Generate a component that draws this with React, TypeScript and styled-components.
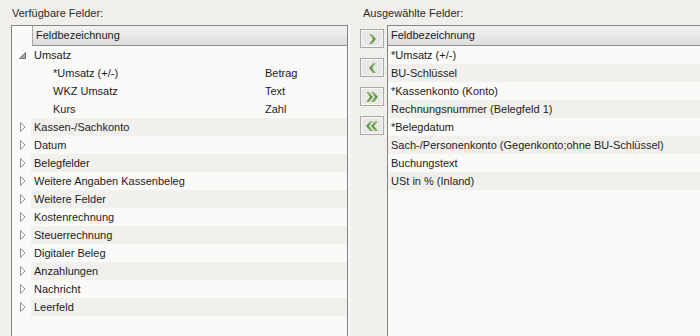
import React from 'react';
import styled, { createGlobalStyle } from 'styled-components';

const GlobalStyle = createGlobalStyle`
  body {
    margin: 0;
    background: #f0efec;
    font-family: "Liberation Sans", Arial, sans-serif;
    font-size: 11px;
    color: #1b1b1b;
    overflow: hidden;
  }
`;

const Page = styled.div`
  display: grid;
  grid-template-columns: 11px 337px 39px 1fr;
  grid-template-rows: 25px 311px;
  height: 336px;
`;

const Label = styled.div<{ col: number; indent: number }>`
  grid-row: 1;
  grid-column: ${p => p.col} / span ${p => (p.col === 2 ? 1 : 2)};
  padding: 6px 0 0 ${p => p.indent}px;
  line-height: 14px;
  color: #2a2a2a;
`;

const ListBox = styled.div<{ col: number; closed?: boolean }>`
  grid-row: 2;
  grid-column: ${p => p.col};
  background: #fafaf8;
  border: 1px solid #848484;
  border-bottom: none;
  ${p => (p.closed ? '' : 'border-right: none;')}
  overflow: hidden;
`;

const Header = styled.div<{ offset: number }>`
  margin-left: ${p => p.offset}px;
  height: 19px;
  line-height: 19px;
  padding-left: 3px;
  background: linear-gradient(#f3f3f2, #dedddb);
  border-bottom: 1px solid #8e8e8e;
  ${p => (p.offset ? 'border-left: 1px solid #a8a8a8;' : '')}
`;

const Row = styled.div`
  display: grid;
  grid-template-columns: 19px 1fr;
  height: 18px;
`;

const Expander = styled.div`
  display: flex;
  align-items: center;
  justify-content: center;
  padding-left: 2px;
`;

const Cell = styled.div<{ striped?: boolean; indent?: number }>`
  display: grid;
  grid-template-columns: 212px 1fr;
  align-items: center;
  padding-left: ${p => p.indent ?? 3}px;
  background: ${p => (p.striped ? '#f1f0ed' : 'transparent')};
  white-space: nowrap;
`;

const PlainRow = styled.div<{ striped?: boolean }>`
  height: 18px;
  line-height: 18px;
  padding-left: 3px;
  background: ${p => (p.striped ? '#f1f0ed' : 'transparent')};
  white-space: nowrap;
`;

const ButtonColumn = styled.div`
  grid-row: 2;
  grid-column: 3;
  display: flex;
  flex-direction: column;
  gap: 10px;
  padding: 4px 0 0 9px;
  border-left: 3px solid #f6f6f4;
`;

const MoveButton = styled.button`
  width: 24px;
  height: 19px;
  padding: 0;
  display: flex;
  align-items: center;
  justify-content: center;
  border: 1px solid #a9a9a9;
  background: #e9e8e6;
  box-shadow: inset 0 0 0 1px #f7f7f6;
`;

const Collapsed = () => (
  <svg width="6" height="10" viewBox="0 0 6 10">
    <path d="M0.5 0.5 L5 5 L0.5 9.5 Z" fill="#fff" stroke="#8f8f8f" />
  </svg>
);

const Opened = () => (
  <svg width="7" height="7" viewBox="0 0 7 7">
    <path d="M6.5 0.5 L6.5 6.5 L0.5 6.5 Z" fill="#a9a9a9" stroke="#6e6e6e" />
  </svg>
);

const Chevron = ({ dir, double }: { dir: 'l' | 'r'; double?: boolean }) => {
  const one = 'M0 0 L3 0 L7 5 L3 10 L0 10 L4 5 Z';
  const w = double ? 12 : 7;
  const id = `g${dir}${double ? 2 : 1}`;
  return (
    <svg width={w} height="10" viewBox={`0 0 ${w} 10`} style={{ transform: dir === 'l' ? 'scaleX(-1)' : undefined }}>
      <defs>
        <linearGradient id={id} x1="0" y1="0" x2="0" y2="1">
          <stop offset="0" stopColor="#9cc383" />
          <stop offset="0.5" stopColor="#5f9343" />
          <stop offset="1" stopColor="#86ae6c" />
        </linearGradient>
      </defs>
      <path d={one} fill={`url(#${id})`} />
      {double && <path d={one} transform="translate(5 0)" fill={`url(#${id})`} />}
    </svg>
  );
};

const groups = [
  'Kassen-/Sachkonto',
  'Datum',
  'Belegfelder',
  'Weitere Angaben Kassenbeleg',
  'Weitere Felder',
  'Kostenrechnung',
  'Steuerrechnung',
  'Digitaler Beleg',
  'Anzahlungen',
  'Nachricht',
  'Leerfeld',
];

const children = [
  { name: '*Umsatz (+/-)', type: 'Betrag' },
  { name: 'WKZ Umsatz', type: 'Text' },
  { name: 'Kurs', type: 'Zahl' },
];

const selected = [
  '*Umsatz (+/-)',
  'BU-Schlüssel',
  '*Kassenkonto (Konto)',
  'Rechnungsnummer (Belegfeld 1)',
  '*Belegdatum',
  'Sach-/Personenkonto (Gegenkonto;ohne BU-Schlüssel)',
  'Buchungstext',
  'USt in % (Inland)',
];

export default function App() {
  return (
    <>
      <GlobalStyle />
      <Page>
        <Label col={2} indent={1}>Verfügbare Felder:</Label>
        <Label col={3} indent={15}>Ausgewählte Felder:</Label>

        <ListBox col={2} closed>
          <Header offset={20}>Feldbezeichnung</Header>
          <Row>
            <Expander><Opened /></Expander>
            <Cell>Umsatz</Cell>
          </Row>
          {children.map(c => (
            <Row key={c.name}>
              <Expander />
              <Cell indent={22}>
                <span>{c.name}</span>
                <span>{c.type}</span>
              </Cell>
            </Row>
          ))}
          {groups.map((g, i) => (
            <Row key={g}>
              <Expander><Collapsed /></Expander>
              <Cell striped={i % 2 === 0}>{g}</Cell>
            </Row>
          ))}
        </ListBox>

        <ButtonColumn>
          <MoveButton><Chevron dir="r" /></MoveButton>
          <MoveButton><Chevron dir="l" /></MoveButton>
          <MoveButton><Chevron dir="r" double /></MoveButton>
          <MoveButton><Chevron dir="l" double /></MoveButton>
        </ButtonColumn>

        <ListBox col={4}>
          <Header offset={0}>Feldbezeichnung</Header>
          {selected.map((s, i) => (
            <PlainRow key={s} striped={i % 2 === 1}>{s}</PlainRow>
          ))}
        </ListBox>
      </Page>
    </>
  );
}
